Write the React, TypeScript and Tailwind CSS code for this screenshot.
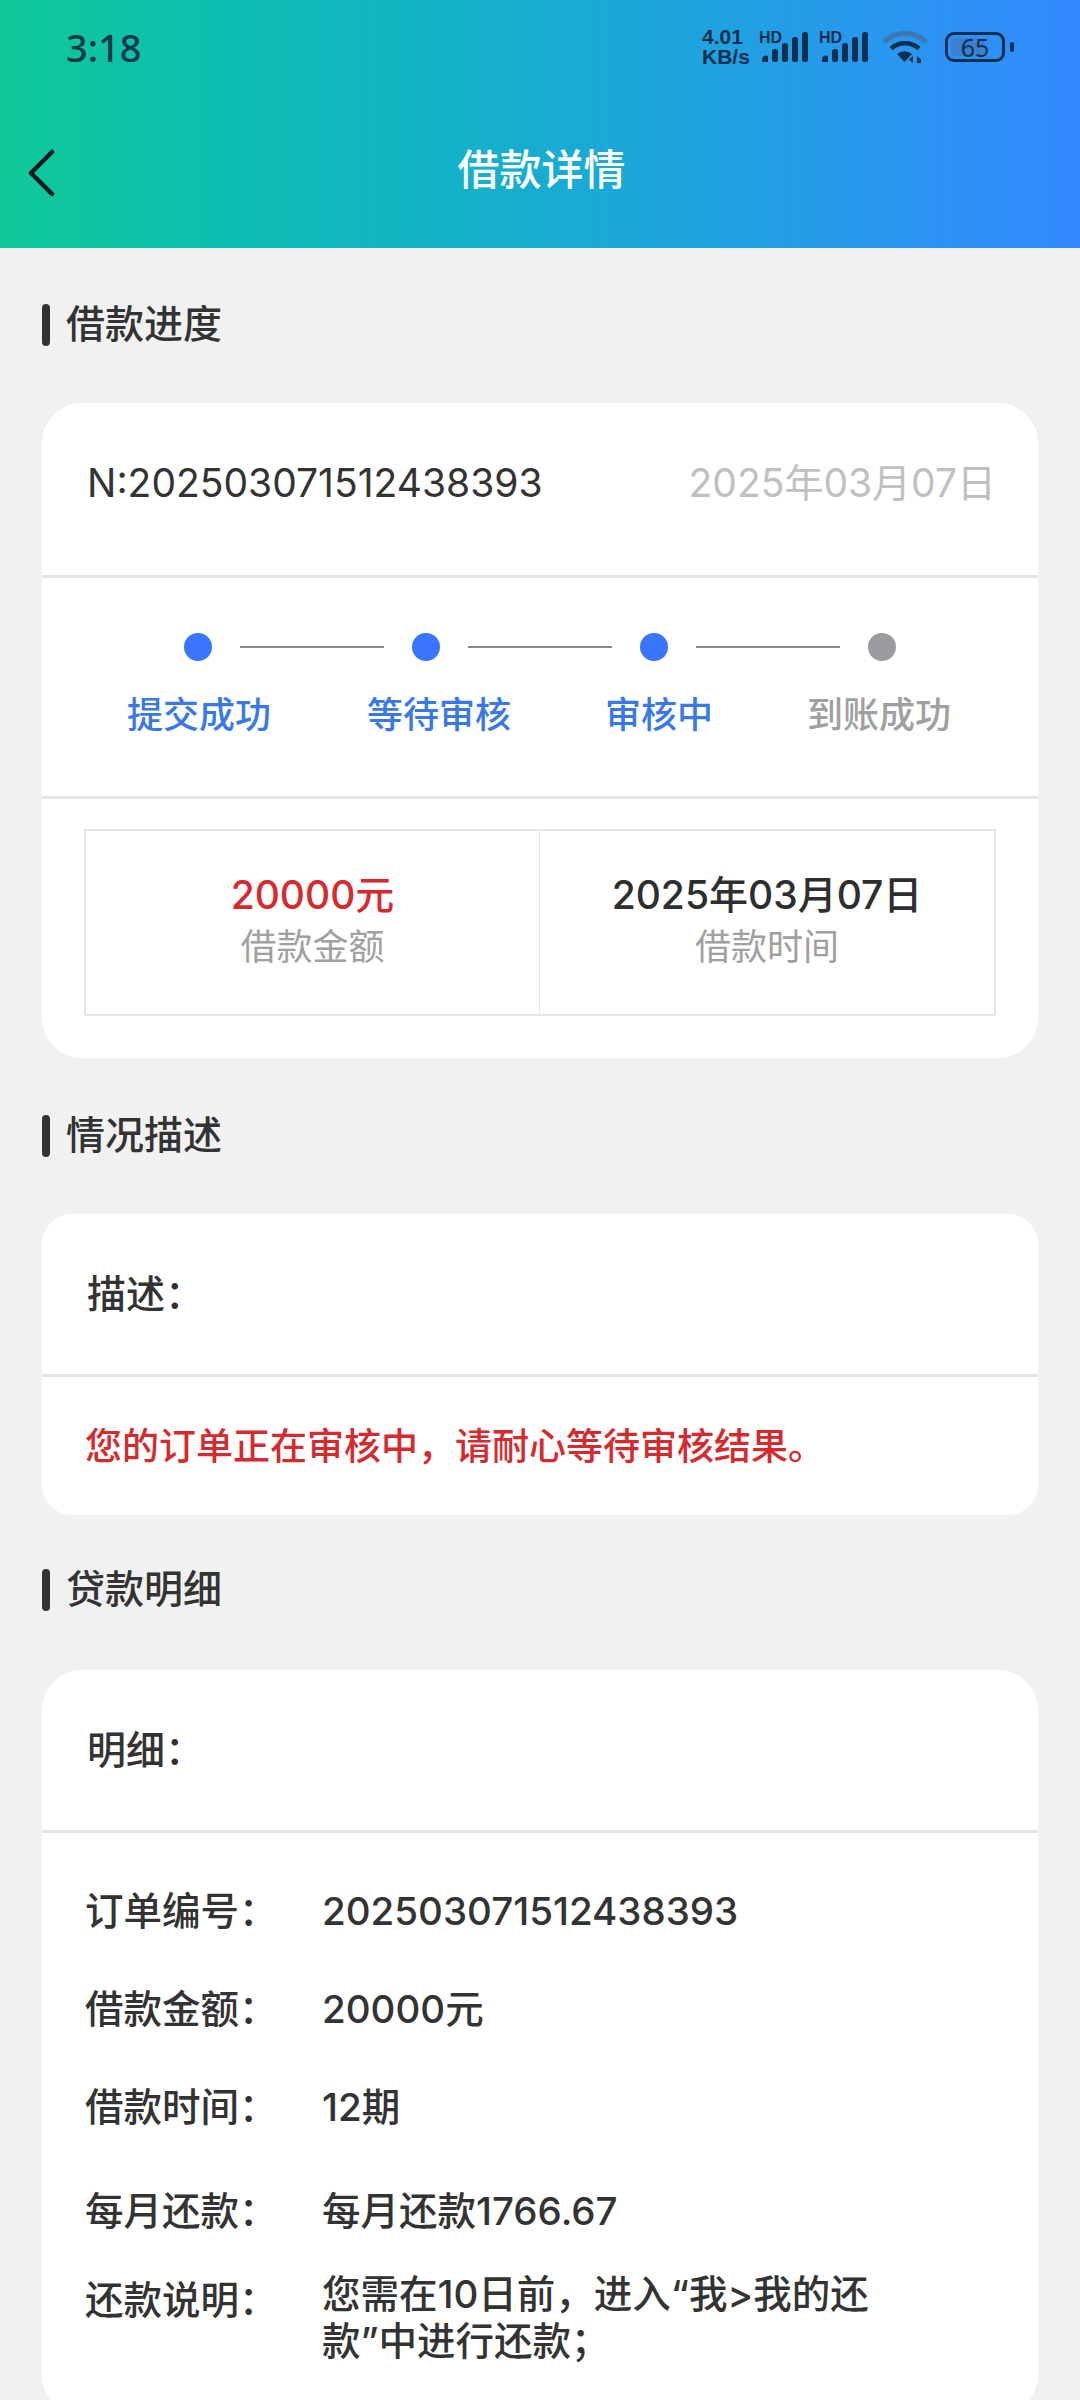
const font = { fontFamily: 'Inter, "Noto Sans CJK SC", sans-serif' };

function Bars() {
  return (
    <svg width="46" height="30" viewBox="0 0 46 30" className="block">
      <path d="M0 30v-3a4 4 0 0 1 6-3v6z" fill="#10304f" />
      <rect x="10" y="17" width="6" height="13" rx="2.500" fill="#10304f" />
      <rect x="20" y="11" width="6" height="19" rx="2.500" fill="#10304f" />
      <rect x="30" y="5" width="6" height="25" rx="2.500" fill="#10304f" />
      <rect x="40" y="0" width="6" height="30" rx="2.500" fill="#10304f" />
    </svg>
  );
}

function Signal() {
  return (
    <div className="relative h-[32px] w-[50px]">
      <div className="absolute left-[3px] top-[1px]">
        <Bars />
      </div>
      <span className="absolute left-0 top-[-1px] text-[16px] leading-[16px] font-bold text-[#10304f]" style={{ fontFamily: '"Liberation Sans", sans-serif' }}>HD</span>
    </div>
  );
}

function StatusBar() {
  return (
    <div className="flex h-[92px] items-center pl-[66px] pt-[2px]">
      <span className="text-[38px] leading-none font-medium text-[#10374a]" style={{ fontFamily: '"Noto Sans", sans-serif' }}>3:18</span>
      <div className="ml-auto mr-[66px] flex items-center">
        <div className="w-[57px] text-[21px] leading-[20px] font-bold text-[#10304f]" style={{ fontFamily: '"Liberation Sans", sans-serif' }}>
          <div>4.01</div>
          <div>KB/s</div>
        </div>
        <Signal />
        <div className="ml-[10px]"><Signal /></div>
        <svg width="46" height="32" viewBox="0 0 46 32" className="ml-[13px] block">
          <path d="M2 11a30 30 0 0 1 42 0" fill="none" stroke="#3f78b0" strokeWidth="5" />
          <path d="M9 17.500a21 21 0 0 1 28 0" fill="none" stroke="#10304f" strokeWidth="4.500" />
          <path d="M15 23a12 12 0 0 1 15 0l-7.500 8z" fill="#10304f" />
          <path d="M31 25l-4 3.500 4 3.500zM35 32v-7l4 3.500v3.500z" fill="#10304f" />
        </svg>
        <div className="relative ml-[17px] flex h-[30px] w-[60px] items-center justify-center rounded-[9px] border-[3px] border-[#10304f]">
          <div className="absolute bottom-[3px] left-[3px] top-[3px] w-[33px] rounded-[3px] bg-[#3b7fd0]" />
          <span className="relative text-[25px] leading-none text-[#10304f]" style={{ fontFamily: '"Noto Sans", sans-serif' }}>65</span>
        </div>
        <div className="ml-[5px] h-[10px] w-[4px] rounded-full bg-[#10304f]" />
      </div>
    </div>
  );
}

function SectionTitle({ label, className }: { label: string; className: string }) {
  return (
    <div className={`flex h-[42px] items-center ${className}`}>
      <div className="h-[42px] w-[8px] rounded-full bg-[#333333]" />
      <span className="ml-[16px] pb-[4px] text-[39px] leading-none font-medium text-[#333333]">{label}</span>
    </div>
  );
}

function Divider() {
  return <div className="h-[3px] bg-[#e4e4e4]" />;
}

function Dot({ grey }: { grey?: boolean }) {
  return <div className={`h-[28px] w-[28px] rounded-full ${grey ? "bg-[#9a9a9f]" : "bg-[#3a75ff]"}`} />;
}

function Link() {
  return <div className="mx-[28px] h-[2px] w-[144px] bg-[#8a8a8a]" />;
}

const steps = [
  { label: "提交成功", width: "w-[240px]", color: "text-[#3a78e8]" },
  { label: "等待审核", width: "w-[238px]", color: "text-[#3a78e8]" },
  { label: "审核中", width: "w-[202px]", color: "text-[#3a78e8]" },
  { label: "到账成功", width: "w-[144px]", color: "text-[#a0a0a0]" },
];

const details = [
  { label: "订单编号\uFF1A", value: "202503071512438393", cls: "h-[98px]" },
  { label: "借款金额\uFF1A", value: "20000元", cls: "h-[98px]" },
  { label: "借款时间\uFF1A", value: "12期", cls: "h-[98px]" },
  { label: "每月还款\uFF1A", value: "每月还款1766.67", cls: "h-[98px] mt-[6px]" },
];

export default function App() {
  return (
    <div className="h-[2400px] w-[1080px] overflow-hidden bg-[#f1f1f1]" style={font}>
      <header className="h-[248px] bg-gradient-to-r from-[#10c998] to-[#3388ff]">
        <StatusBar />
        <div className="relative flex h-[156px] items-center justify-center pl-[3px]">
          <svg width="30" height="48" viewBox="0 0 30 48" className="absolute left-[26px] top-[57px]">
            <path d="M26 3 L5 24 L26 45" fill="none" stroke="#101820" strokeWidth="4.500" strokeLinecap="round" strokeLinejoin="round" />
          </svg>
          <h1 className="text-[42px] leading-none font-medium text-white">借款详情</h1>
        </div>
      </header>

      <main className="px-[42px]">
        <SectionTitle label="借款进度" className="mt-[56px]" />

        <section className="mt-[57px] h-[655px] overflow-hidden rounded-[40px] bg-white">
          <div className="flex h-[172px] items-center justify-between pb-[14px] pl-[45px] pr-[42px]">
            <span className="text-[39px] leading-none text-[#333333]">N:202503071512438393</span>
            <span className="text-[39px] leading-none text-[#c0c0c0]">2025年03月07日</span>
          </div>
          <Divider />
          <div className="h-[218px]">
            <div className="flex items-center pl-[142px] pt-[55px]">
              <Dot />
              <Link />
              <Dot />
              <Link />
              <Dot />
              <Link />
              <Dot grey />
            </div>
            <div className="mt-[32px] flex pl-[85px]">
              {steps.map((s) => (
                <span key={s.label} className={`${s.width} text-[36px] leading-[44px] font-medium ${s.color}`}>{s.label}</span>
              ))}
            </div>
          </div>
          <Divider />
          <div className="mx-[42px] mt-[30px] grid h-[187px] grid-cols-2 border-2 border-[#e6e6e6]">
            <div className="flex flex-col items-center justify-center border-r border-[#e6e6e6] pb-[4px]">
              <span className="text-[39px] leading-[52px] font-medium text-[#d52b2e]">20000元</span>
              <span className="text-[36px] leading-[52px] text-[#a0a0a0]">借款金额</span>
            </div>
            <div className="flex flex-col items-center justify-center pb-[4px]">
              <span className="text-[39px] leading-[52px] font-medium text-[#2e2e2e]">2025年03月07日</span>
              <span className="text-[36px] leading-[52px] text-[#a0a0a0]">借款时间</span>
            </div>
          </div>
        </section>

        <SectionTitle label="情况描述" className="mt-[57px]" />

        <section className="mt-[57px] h-[301px] overflow-hidden rounded-[30px] bg-white">
          <div className="flex h-[160px] items-center pb-[2px] pl-[45px] text-[39px] leading-none font-medium text-[#333333]">{"描述\uFF1A"}</div>
          <Divider />
          <div className="flex h-[138px] items-center pl-[43px] text-[37px] leading-none font-medium text-[#d52b2e]">{"您的订单正在审核中\uFF0C请耐心等待审核结果。"}</div>
        </section>

        <SectionTitle label="贷款明细" className="mt-[54px]" />

        <section className="mt-[59px] h-[745px] overflow-hidden rounded-[40px] bg-white">
          <div className="flex h-[160px] items-center pb-[2px] pl-[45px] text-[39px] leading-none font-medium text-[#333333]">{"明细\uFF1A"}</div>
          <Divider />
          <div className="pl-[43px] pt-[29px] text-[38.5px] font-medium text-[#333333]">
            {details.map((d) => (
              <div key={d.label} className={`flex items-center ${d.cls}`}>
                <span className="w-[237px] shrink-0 leading-none">{d.label}</span>
                <span className="leading-none">{d.value}</span>
              </div>
            ))}
            <div className="mt-[11px] flex items-start">
              <span className="mt-[10px] w-[237px] shrink-0 leading-none">{"还款说明\uFF1A"}</span>
              <span className="w-[580px] leading-[47px]">{"您需在10日前\uFF0C进入\u201C我>我的还款\u201D中进行还款\uFF1B"}</span>
            </div>
          </div>
        </section>
      </main>
    </div>
  );
}
